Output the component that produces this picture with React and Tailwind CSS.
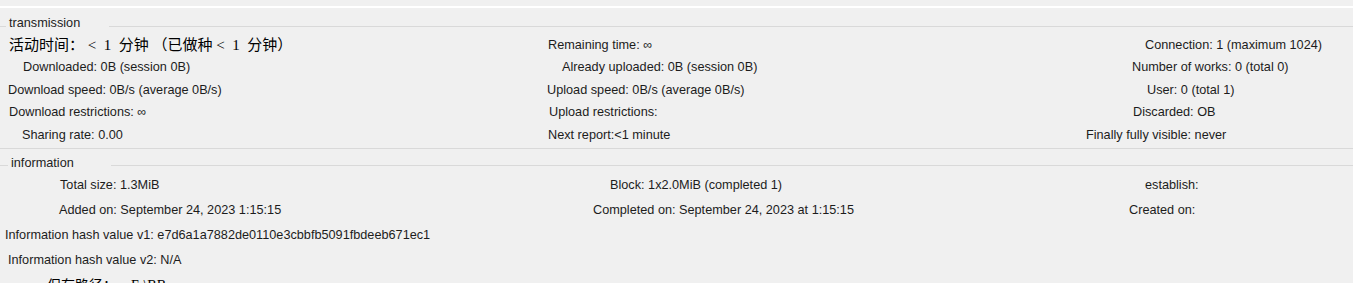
import React from 'react';

const Row = ({ h, cells }) => (
  <div className={`flex items-center ${h}`}>
    <div className="w-[540px] shrink-0">{cells[0]}</div>
    <div className="w-[540px] shrink-0">{cells[1]}</div>
    <div className="flex-1">{cells[2]}</div>
  </div>
);

const GroupTitle = ({ label, lead, height, shift }) => (
  <div className={`flex items-end ${height}`}>
    <div className={`${lead} border-b border-[#d9d9d9]`} />
    <div className={`w-[103px] shrink-0 pl-[3px] leading-[12px] ${shift} text-[#222]`}>{label}</div>
    <div className="flex-1 border-b border-[#d9d9d9]" />
  </div>
);

const cjk = { fontFamily: '"Liberation Serif", "Noto Sans CJK SC", serif' };

const App = () => {
  return (
    <div
      className="h-[283px] w-full overflow-hidden bg-[#f0f0f0] text-[12.7px] text-[#1c1c1c]"
      style={{ fontFamily: '"Liberation Sans", "Noto Sans CJK SC", sans-serif' }}
    >
      <div className="h-[6px]" />
      <div className="h-[2px] bg-white" />

      {/* transmission */}
      <GroupTitle label="transmission" lead="w-[6px]" height="h-[19px]" shift="translate-y-[2px]" />
      <div className="pt-[7px]">
        <Row
          h="h-[22.5px]"
          cells={[
            <div className="pl-[9px] text-[15px] text-black whitespace-pre" style={cjk}>
              活动时间： &lt;  1  分钟 （已做种 &lt;  1  分钟）
            </div>,
            <div className="pl-[8px]">Remaining time: ∞</div>,
            <div className="pl-[65px]">Connection: 1 (maximum 1024)</div>,
          ]}
        />
        <Row
          h="h-[22.5px]"
          cells={[
            <div className="pl-[23px]">Downloaded: 0B (session 0B)</div>,
            <div className="pl-[22px]">Already uploaded: 0B (session 0B)</div>,
            <div className="pl-[52px]">Number of works: 0 (total 0)</div>,
          ]}
        />
        <Row
          h="h-[22.5px]"
          cells={[
            <div className="pl-[8px]">Download speed: 0B/s (average 0B/s)</div>,
            <div className="pl-[7px]">Upload speed: 0B/s (average 0B/s)</div>,
            <div className="pl-[67px]">User: 0 (total 1)</div>,
          ]}
        />
        <Row
          h="h-[22.5px]"
          cells={[
            <div className="pl-[9px]">Download restrictions: ∞</div>,
            <div className="pl-[9px]">Upload restrictions:</div>,
            <div className="pl-[53px]">Discarded: OB</div>,
          ]}
        />
        <Row
          h="h-[22.5px]"
          cells={[
            <div className="pl-[22px]">Sharing rate: 0.00</div>,
            <div className="pl-[8px]">Next report:&lt;1 minute</div>,
            <div className="pl-[6px]">Finally fully visible: never</div>,
          ]}
        />
      </div>
      <div className="h-[2.5px] border-b border-[#d9d9d9]" />

      {/* information */}
      <GroupTitle label="information" lead="w-[8px]" height="h-[17px]" shift="translate-y-[3px]" />
      <div className="pt-[7px]">
        <Row
          h="h-[25px]"
          cells={[
            <div className="pl-[60px]">Total size: 1.3MiB</div>,
            <div className="pl-[70px]">Block: 1x2.0MiB (completed 1)</div>,
            <div className="pl-[65px]">establish:</div>,
          ]}
        />
        <Row
          h="h-[25px]"
          cells={[
            <div className="pl-[59px]">Added on: September 24, 2023 1:15:15</div>,
            <div className="pl-[53px]">Completed on: September 24, 2023 at 1:15:15</div>,
            <div className="pl-[49px]">Created on:</div>,
          ]}
        />
        <div className="flex h-[25px] items-center pl-[5px]">
          Information hash value v1: e7d6a1a7882de0110e3cbbfb5091fbdeeb671ec1
        </div>
        <div className="flex h-[25px] items-center pl-[8px]">Information hash value v2: N/A</div>
        <div className="flex h-[25px] items-center pl-[47px] text-[14px] text-black whitespace-pre" style={cjk}>
          保存路径：    E:\BB
        </div>
      </div>
    </div>
  );
};

export default App;
